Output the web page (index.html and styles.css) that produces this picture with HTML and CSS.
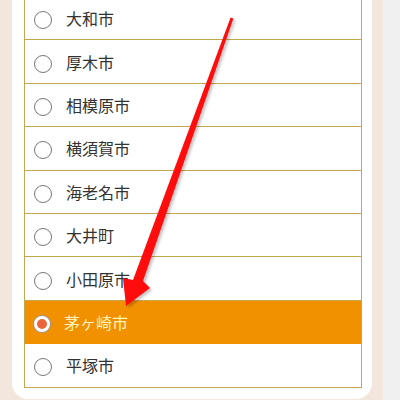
FILE: index.html
```html
<!DOCTYPE html>
<html lang="ja">
<head>
    <meta charset="UTF-8">
    <meta name="viewport" content="width=device-width, initial-scale=1.0">
    <title>市区町村を選択</title>
    <link rel="stylesheet" href="styles.css">
</head>
<body>
    <div class="frame">
        <div class="card">
            <ul class="city-list">
                <li class="city"><span class="radio"></span>大和市</li>
                <li class="city"><span class="radio"></span>厚木市</li>
                <li class="city"><span class="radio"></span>相模原市</li>
                <li class="city"><span class="radio"></span>横須賀市</li>
                <li class="city"><span class="radio"></span>海老名市</li>
                <li class="city"><span class="radio"></span>大井町</li>
                <li class="city"><span class="radio"></span>小田原市</li>
                <li class="city selected"><span class="radio"></span>茅ヶ崎市</li>
                <li class="city"><span class="radio"></span>平塚市</li>
            </ul>
        </div>
    </div>

    <svg class="arrow" width="400" height="400" viewBox="0 0 400 400">
        <defs>
            <filter id="shadow" x="-20%" y="-20%" width="140%" height="140%">
                <feDropShadow dx="2" dy="2" stdDeviation="1.5" flood-color="#000" flood-opacity="0.25"/>
            </filter>
        </defs>
        <polygon filter="url(#shadow)" fill="#ff0a0a"
            points="230.6,17.5 233.4,18.5 143,281 150,288 126,306 123,278 133,280"/>
    </svg>
</body>
</html>
```

FILE: styles.css
```css
body {
    margin: 0;
    background-color: #f0f0f0;
    font-family: "Noto Sans CJK JP", "Noto Sans", sans-serif;
    overflow: hidden;
}
.frame {
    width: 383px;
    height: 400px;
    background-color: #f3e6dd;
    padding: 0 11px 0 12px;
    box-sizing: border-box;
}
.card {
    background-color: #fff;
    border-radius: 0 0 16px 16px;
    padding: 0 10px 11px 12px;
}
.city-list {
    list-style: none;
    margin: 0;
    padding: 0;
    border: 1px solid #c4a84e;
    border-top: none;
    position: relative;
    top: -3px;
    margin-bottom: -3px;
}
.city {
    display: flex;
    align-items: center;
    height: 42.4px;
    border-bottom: 1px solid #c4a84e;
    padding-left: 9px;
    font-size: 16px;
    color: #333;
}
.city:last-child {
    border-bottom: none;
}
.radio {
    width: 16px;
    height: 16px;
    border: 1px solid #777;
    border-radius: 50%;
    background-color: #fff;
    margin-right: 14px;
    margin-top: 4px;
    box-sizing: content-box;
    flex-shrink: 0;
}
.selected {
    background-color: #f29100;
    color: #fff3b8;
    border-bottom-color: #f29100;
}
.selected .radio {
    background-color: #e8663a;
    border: 3px solid #fff;
    width: 10px;
    height: 10px;
    box-shadow: 0 0 0 1px #999;
}
.arrow {
    position: absolute;
    left: 0;
    top: 0;
    pointer-events: none;
}
```
